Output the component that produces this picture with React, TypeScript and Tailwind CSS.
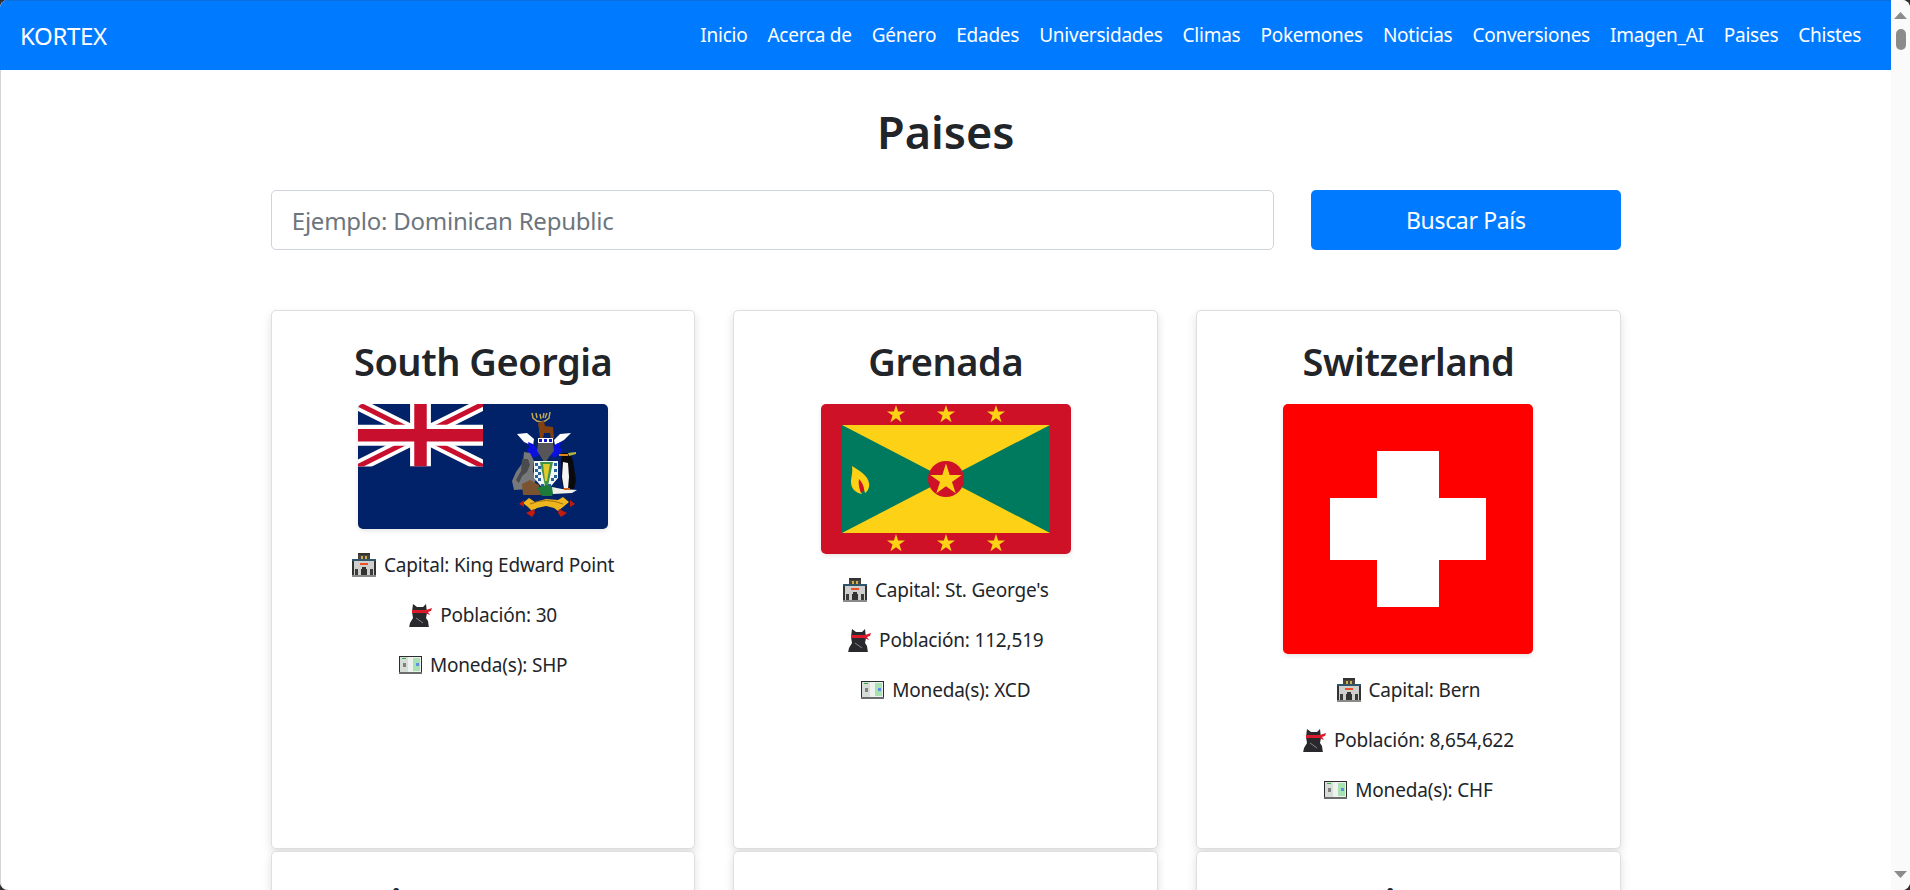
const links = ["Inicio", "Acerca de", "Género", "Edades", "Universidades", "Climas", "Pokemones", "Noticias", "Conversiones", "Imagen_AI", "Paises", "Chistes"]

function Star({ cx, cy, r, fill = "#fcd116" }: { cx: number; cy: number; r: number; fill?: string }) {
    const pts = []
    for (let i = 0; i < 10; i++) {
        const rad = i % 2 === 0 ? r : r * 0.382
        const a = (Math.PI / 5) * i - Math.PI / 2
        pts.push(`${cx + rad * Math.cos(a)},${cy + rad * Math.sin(a)}`)
    }
    return <polygon points={pts.join(" ")} fill={fill} />
}

function SouthGeorgiaFlag() {
    return (
        <svg width="250" height="125" viewBox="0 0 250 125" className="block">
            <rect width="250" height="125" fill="#012169" />
            <svg x="0" y="0" width="125" height="62.5" viewBox="0 0 60 30" preserveAspectRatio="none">
                <path d="M0 0L60 30M60 0L0 30" stroke="#fff" strokeWidth="6" />
                <path d="M0 0L30 15M60 30L30 15M60 0L30 15M0 30L30 15" stroke="#c8102e" strokeWidth="2.4" />
                <path d="M30 0V30M0 15H60" stroke="#fff" strokeWidth="10" />
                <path d="M30 0V30M0 15H60" stroke="#c8102e" strokeWidth="6" />
            </svg>
            {/* antlers and reindeer */}
            <path d="M174 9l1 5 4 3 4 1 4-1 4-3 1-6M178 9l1 5M182 10l1 5M186 9l-1 5M189 9l-2 5" stroke="#c2a456" strokeWidth="1.5" fill="none" />
            <path d="M181 18l5-1 1 5 8 1 1 11-3 1-1-6-6 0-1 6-3 0-1-10-1-5z" fill="#80400f" />
            {/* wings */}
            <path d="M159 30l10-1 7 6-1 7-9-4z" fill="#fff" />
            <path d="M213 29l-11 1-6 6 1 5 9-5z" fill="#fff" />
            {/* mantling */}
            <path d="M170 38l5 2 5 6 1 5-5 3-7-7 2-4z" fill="#0a10e0" />
            <path d="M203 38l-5 2-5 6-1 5 5 3 7-7-2-4z" fill="#0a10e0" />
            {/* helm */}
            <rect x="180" y="34" width="15" height="5" fill="#fff" />
            <rect x="181" y="35" width="3" height="3" fill="#1414c8" />
            <rect x="186" y="35" width="3" height="3" fill="#1414c8" />
            <rect x="191" y="35" width="3" height="3" fill="#1414c8" />
            <path d="M180 39h15l1 8-5 6-3 5h-2l-3-5-4-6z" fill="#55555a" />
            {/* seal */}
            <path d="M166 48l6 1 4 8-1 10 3 9-5 9-17 1-2-9 4-9 7-10z" fill="#77787a" />
            <path d="M164 55l6 0 2 6-3 7-5 4-3 7-3-3 5-9z" fill="#4a4b4e" />
            <path d="M164 80l8-4 9 5 2 10-18 0z" fill="#7a5330" />
            {/* shield */}
            <path d="M176 57h24v17l-12 14-12-14z" fill="#f2f6f4" />
            <path d="M177 59h3v3h-3zM177 65h3v3h-3zM177 71h3v3h-3zM180 62h3v3h-3zM180 68h3v3h-3zM180 74h3v3h-3zM183 80h3v3h-3zM196 59h3v3h-3zM196 65h3v3h-3zM196 71h3v3h-3zM193 74h3v3h-3zM190 80h3v3h-3z" fill="#27609e" />
            <path d="M182 58h13l-5 24h-3z" fill="#3d9247" />
            <path d="M185 60h7l-3 17h-2z" fill="#e3c92c" />
            <path d="M179 84l9-3 9 3-3 8h-10z" fill="#1e7a3a" />
            {/* penguin */}
            <path d="M204 49l8 0 3 8 3 19-2 9-10 1-3-12 0-17z" fill="#0a0a0d" />
            <path d="M205 58l5 1 1 14-1 12-4 0-2-12z" fill="#f4f4f4" />
            <path d="M201 50h9l0 2-9 0z" fill="#d88520" />
            <path d="M210 49l8-1 0 2-7 2z" fill="#b6b53f" />
            {/* duck */}
            <path d="M194 83l10 2 15 1-5 3-19 1z" fill="#eef0ea" />
            <path d="M206 84l6 0 0 2-6 0z" fill="#d9651c" />
            {/* scroll */}
            <path d="M165 99l6-5 6 4 11-3 12 1 5-3 6 5-6 5-5 4-4-3-8-2-9 2-5 3-4-4z" fill="#efb51c" />
            <path d="M166 96l-5 4 5 3zM212 96l5 4-5 3zM176 105l-8 4 6 4 3-4zM201 105l8 4-6 4-3-4z" fill="#c21b10" />
            <path d="M172 100q16-7 33 0" stroke="#8a5d10" strokeWidth="0.8" fill="none" />
        </svg>
    )
}

function GrenadaFlag() {
    return (
        <svg width="250" height="150" viewBox="0 0 250 150" className="block">
            <rect width="250" height="150" fill="#ce1126" />
            <rect x="21" y="21" width="208" height="108" fill="#fcd116" />
            <path d="M21 21L125 75L21 129z" fill="#007a5e" />
            <path d="M229 21L125 75L229 129z" fill="#007a5e" />
            <circle cx="125" cy="75" r="18" fill="#ce1126" />
            <Star cx={125} cy={76} r={16.5} />
            {[75, 125, 175].map((x) => <Star key={x} cx={x} cy={10.5} r={9.5} />)}
            {[75, 125, 175].map((x) => <Star key={x} cx={x} cy={139.5} r={9.5} />)}
            <path d="M31 62c6 4 16 9 17 17 1 5-2 9-4 10-1-5-3-8-5-10-1 3 1 9 2 11-6-1-11-5-11-12 0-5 2-9 1-16z" fill="#fcd116" />
            <path d="M38 75c3 3 5 7 5 11l-3 3c-1-3-3-8-2-14z" fill="#ce1126" />
        </svg>
    )
}

function SwissFlag() {
    return (
        <svg width="250" height="250" viewBox="0 0 250 250" className="block">
            <rect width="250" height="250" fill="#ff0000" />
            <path d="M94 47h62v47h47v62h-47v47H94v-47H47V94h47z" fill="#fff" />
        </svg>
    )
}

function BuildingIcon() {
    return (
        <svg width="24" height="24" viewBox="0 0 24 24" className="shrink-0" shapeRendering="crispEdges">
            <rect x="6" y="0" width="12" height="2" fill="#333" />
            <rect x="6" y="2" width="12" height="4" fill="#4a463f" />
            <rect x="9" y="3" width="2" height="3" fill="#d0ae4a" />
            <rect x="13" y="3" width="2" height="3" fill="#d0ae4a" />
            <rect x="0" y="6" width="24" height="2" fill="#2f566a" />
            <rect x="0" y="8" width="24" height="16" fill="#333" />
            <rect x="2" y="8" width="20" height="14" fill="#cfcfcd" />
            <rect x="8" y="10" width="8" height="2" fill="#ee5028" />
            <rect x="3" y="16" width="3" height="6" fill="#3c3c3c" />
            <rect x="18" y="16" width="3" height="6" fill="#3c3c3c" />
            <rect x="10" y="14" width="4" height="8" fill="#333" />
            <rect x="9" y="16" width="6" height="6" fill="#333" />
            <rect x="0" y="22" width="24" height="2" fill="#8a8a88" />
        </svg>
    )
}

function NinjaIcon() {
    return (
        <svg width="23" height="23" viewBox="0 0 23 23" className="shrink-0">
            <path d="M4 0l4 3h6l3-3 1 9-1 5 2 3 1 7H0l1-5 3-5-1-6z" fill="#29292d" />
            <path d="M3 6h14l6-2-1 3-3 1 2 3-5-2H3z" fill="#dc1a2c" />
            <path d="M7 14l7 5" stroke="#85858a" strokeWidth="1" />
        </svg>
    )
}

function MoneyIcon() {
    return (
        <svg width="23" height="18" viewBox="0 0 23 18" className="shrink-0" shapeRendering="crispEdges">
            <rect width="23" height="18" fill="#2c2c2c" />
            <rect x="1" y="1" width="21" height="15" fill="#eef2ee" />
            <rect x="1" y="1" width="8" height="15" fill="#d6dcd6" />
            <rect x="14" y="2" width="7" height="13" fill="#a8e2b2" />
            <rect x="3" y="2" width="4" height="1" fill="#35ad4c" />
            <rect x="4" y="7" width="3" height="4" fill="#808080" />
            <rect x="17" y="7" width="3" height="3" fill="#5d8fe6" />
            <rect x="0" y="16" width="23" height="2" fill="#6a6c6d" />
        </svg>
    )
}

const countries = [
    { name: "South Georgia", flag: <SouthGeorgiaFlag />, capital: "King Edward Point", population: "30", currency: "SHP" },
    { name: "Grenada", flag: <GrenadaFlag />, capital: "St. George's", population: "112,519", currency: "XCD" },
    { name: "Switzerland", flag: <SwissFlag />, capital: "Bern", population: "8,654,622", currency: "CHF" },
    { name: "Sierra Leone", flag: null, capital: "", population: "", currency: "" },
    { name: "Hungary", flag: null, capital: "", population: "", currency: "" },
    { name: "Eritrea", flag: null, capital: "", population: "", currency: "" },
]

function Card({ country }: { country: typeof countries[number] }) {
    return (
        <div className="h-[539px] bg-white border border-[#dfdfdf] rounded-[5px] shadow-[0_4px_10px_rgba(0,0,0,0.13)] flex flex-col items-center pt-[17px]">
            <h2 className="text-[38px] leading-[66px] font-semibold text-[#212529] tracking-[-0.012em]">{country.name}</h2>
            {country.flag && (
                <>
                    <div className="mt-[10px] rounded-[5px] overflow-hidden shadow-[0_2px_4px_rgba(0,0,0,0.1)]">{country.flag}</div>
                    <div className="mt-[11px] flex flex-col items-center text-[19px] text-[#212529] tracking-[-0.01em]">
                        <p className="h-[50px] flex items-center gap-[8px]"><BuildingIcon />Capital: {country.capital}</p>
                        <p className="h-[50px] flex items-center gap-[8px]"><NinjaIcon />Población: {country.population}</p>
                        <p className="h-[50px] flex items-center gap-[8px]"><MoneyIcon />Moneda(s): {country.currency}</p>
                    </div>
                </>
            )}
        </div>
    )
}

export default function App() {
    return (
        <div className="h-[890px] bg-[#2e2e2e] overflow-hidden font-['Noto_Sans',sans-serif]">
            <div className="h-[890px] flex bg-white rounded-[8px] overflow-hidden shadow-[inset_1px_0_0_#d4d4d4]">
                <div className="flex-1 min-w-0 overflow-hidden">
                    <header className="h-[70px] bg-[#007bff] border-t border-[#0a6fd8] flex items-center justify-between pl-[20px] pr-[30px] text-white">
                        <div className="text-[24px] tracking-[-0.015em]">KORTEX</div>
                        <nav className="flex items-center gap-[20px] text-[19px] tracking-[-0.013em]">
                            {links.map((link) => <a key={link} href="#">{link}</a>)}
                        </nav>
                    </header>
                    <main className="w-[1350px] ml-[270.8px]">
                        <h1 className="h-[120px] pt-[3px] flex items-center justify-center text-[45px] font-semibold text-[#212529]">Paises</h1>
                        <form className="flex gap-[37px] h-[60px]">
                            <input
                                className="flex-1 border border-[#ced4da] rounded-[5px] px-[20px] pt-[2px] text-[24px] tracking-[-0.01em] outline-none placeholder:text-[#6c757d]"
                                placeholder="Ejemplo: Dominican Republic"
                            />
                            <button type="button" className="w-[310px] pt-[1px] bg-[#007bff] text-white rounded-[5px] text-[23px] tracking-[-0.015em]">Buscar País</button>
                        </form>
                        <div className="mt-[60px] grid grid-cols-3 gap-x-[38px] gap-y-[2px]">
                            {countries.map((c) => <Card key={c.name} country={c} />)}
                        </div>
                    </main>
                </div>
                <div className="w-[19px] shrink-0 bg-[#fafafa] flex flex-col items-center justify-between pt-[12px] pb-[12px]">
                    <div className="flex flex-col items-center gap-[10px]">
                        <svg width="13" height="7" viewBox="0 0 13 7"><path d="M6.5 0L13 7H0z" fill="#8b8b8b" /></svg>
                        <div className="w-[10px] h-[21px] rounded-full bg-[#8b8b8b]" />
                    </div>
                    <svg width="13" height="7" viewBox="0 0 13 7"><path d="M6.5 7L13 0H0z" fill="#8b8b8b" /></svg>
                </div>
            </div>
        </div>
    )
}
